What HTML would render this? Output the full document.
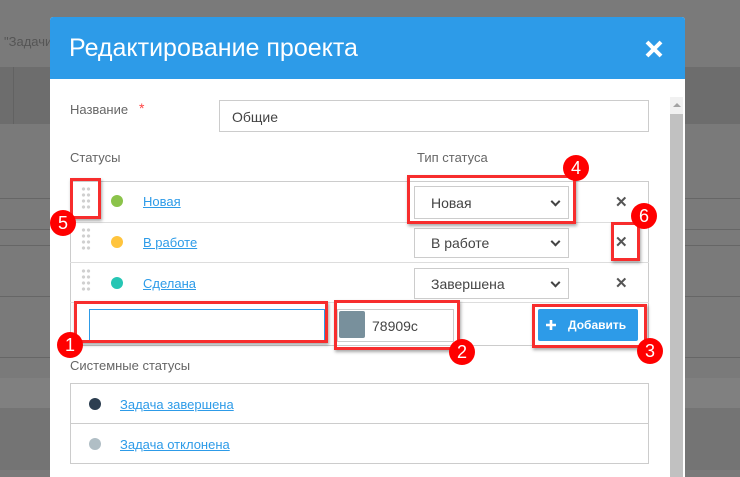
<!DOCTYPE html>
<html><head><meta charset="utf-8"><style>
*{box-sizing:border-box;margin:0;padding:0}
body{width:740px;height:470px;overflow:hidden;background:#7a7a7a;font-family:"Liberation Sans",sans-serif;position:relative}
.a{position:absolute}
.ln{position:absolute;left:0;width:740px;height:1px;background:#666}
.t{color:#666;font-size:13px}
.lk{color:#2d9be8;text-decoration:underline;font-size:13px}
.sel{position:absolute;border:1px solid #ccc;background:#fff;font-size:14px;color:#444;padding-left:16px;display:flex;align-items:center}
.sel:after{content:"";position:absolute;right:9px;top:50%;width:5px;height:5px;border-right:2px solid #444;border-bottom:2px solid #444;transform:translateY(-70%) rotate(45deg)}
.dots{position:absolute;width:10px;height:24px;background-image:radial-gradient(circle,#d0d0d0 1.4px,transparent 1.9px);background-size:5px 6px}
.dot{position:absolute;width:12px;height:12px;border-radius:50%}
.x{position:absolute;font-size:15px;font-weight:bold;color:#555}
.rb{position:absolute;border:3px solid #f72d2d;box-shadow:1px 2px 3px rgba(0,0,0,.35)}
.rc{position:absolute;width:26px;height:26px;border-radius:50%;background:#f00;color:#fff;font-size:18px;text-align:center;line-height:26px}
</style></head><body>
<div class="a" style="left:0;top:67px;width:740px;height:57px;background:#6d6d6d"></div>
<div class="a" style="left:13px;top:67px;width:1px;height:57px;background:#626262"></div>
<div class="a" style="left:0;top:378px;width:740px;height:30px;background:#808080"></div>
<div class="a" style="left:0;top:408px;width:740px;height:62px;background:#747474"></div>
<div class="ln" style="top:198px"></div><div class="ln" style="top:229px"></div><div class="ln" style="top:245px"></div><div class="ln" style="top:296px"></div><div class="ln" style="top:357px"></div>
<div class="a" style="left:4px;top:34px;font-size:13px;color:#555">"Задачи</div>

<div class="a" style="left:50px;top:17px;width:635px;height:460px;background:#fff;border-radius:3px 3px 0 0;overflow:hidden">
 <div class="a" style="left:0;top:0;width:635px;height:62px;background:#2d9be8"></div>
 <div class="a" style="left:19px;top:17px;font-size:25px;color:#fff">Редактирование проекта</div>
 <svg class="a" style="left:595px;top:23px" width="18" height="18" viewBox="0 0 18 18"><path d="M2 2L16 16M16 2L2 16" stroke="#fff" stroke-width="4"/></svg>
 <div class="a" style="left:620px;top:80px;width:13px;height:380px;background:#f1f1f1"></div>
 <div class="a" style="left:620px;top:97px;width:13px;height:370px;background:#c1c1c1"></div>
 <div class="a" style="left:623px;top:86px;border-left:4px solid transparent;border-right:4px solid transparent;border-bottom:4px solid #a3a3a3"></div>
</div>

<div class="a t" style="left:70px;top:102px">Название</div>
<div class="a" style="left:139px;top:100px;color:#f44;font-size:14px">*</div>
<div class="a" style="left:219px;top:100px;width:430px;height:32px;border:1px solid #ccc;font-size:14px;color:#444;padding:8px 12px">Общие</div>
<div class="a t" style="left:70px;top:150px">Статусы</div>
<div class="a t" style="left:417px;top:150px">Тип статуса</div>

<div class="a" style="left:70px;top:181px;width:579px;height:165px;border:1px solid #ccc"></div>
<div class="a" style="left:70px;top:222px;width:579px;height:1px;background:#ddd"></div>
<div class="a" style="left:70px;top:262px;width:579px;height:1px;background:#ddd"></div>
<div class="a" style="left:70px;top:302px;width:579px;height:1px;background:#ddd"></div>

<div class="dots" style="left:81px;top:186px"></div>
<div class="dots" style="left:81px;top:227px"></div>
<div class="dots" style="left:81px;top:268px"></div>
<div class="dot" style="left:111px;top:195px;background:#8bc34a"></div>
<div class="dot" style="left:111px;top:236px;background:#ffc43d"></div>
<div class="dot" style="left:111px;top:277px;background:#26c6b4"></div>
<div class="a lk" style="left:143px;top:194px">Новая</div>
<div class="a lk" style="left:143px;top:235px">В работе</div>
<div class="a lk" style="left:143px;top:276px">Сделана</div>
<div class="sel" style="left:414px;top:186px;width:155px;height:33px">Новая</div>
<div class="sel" style="left:414px;top:228px;width:155px;height:30px">В работе</div>
<div class="sel" style="left:414px;top:268px;width:155px;height:31px">Завершена</div>
<div class="x" style="left:615px;top:193px">✕</div>
<div class="x" style="left:615px;top:233px">✕</div>
<div class="x" style="left:615px;top:274px">✕</div>

<div class="a" style="left:89px;top:309px;width:236px;height:33px;border:1px solid #2d9be8"></div>
<div class="a" style="left:337px;top:309px;width:117px;height:33px;border:1px solid #ccc;font-size:14px;color:#444;padding:8px 0 0 34px">78909c</div>
<div class="a" style="left:339px;top:311px;width:26px;height:27px;background:#78909c;border-radius:2px"></div>
<div class="a" style="left:538px;top:309px;width:100px;height:32px;background:#2d9be8;border-radius:2px;color:#fff;font-size:12px;font-weight:bold;padding-top:9px;padding-left:30px">Добавить</div>
<svg class="a" style="left:545px;top:319px" width="12" height="12" viewBox="0 0 12 12"><path d="M6 1V11M1 6H11" stroke="#fff" stroke-width="2.6"/></svg>

<div class="a t" style="left:70px;top:358px">Системные статусы</div>
<div class="a" style="left:70px;top:383px;width:579px;height:81px;border:1px solid #ccc"></div>
<div class="a" style="left:70px;top:423px;width:579px;height:1px;background:#ccc"></div>
<div class="dot" style="left:89px;top:398px;background:#2c3e50"></div>
<div class="dot" style="left:89px;top:438px;background:#b0bec5"></div>
<div class="a lk" style="left:120px;top:397px">Задача завершена</div>
<div class="a lk" style="left:120px;top:437px">Задача отклонена</div>

<div class="rb" style="left:70px;top:178px;width:31px;height:41px"></div>
<div class="rb" style="left:407px;top:175px;width:169px;height:49px"></div>
<div class="rb" style="left:611px;top:222px;width:29px;height:39px"></div>
<div class="rb" style="left:74px;top:301px;width:254px;height:42px"></div>
<div class="rb" style="left:334px;top:300px;width:126px;height:50px"></div>
<div class="rb" style="left:532px;top:304px;width:115px;height:44px"></div>
<div class="rc" style="left:50px;top:210px">5</div>
<div class="rc" style="left:563px;top:155px">4</div>
<div class="rc" style="left:631px;top:203px">6</div>
<div class="rc" style="left:57px;top:332px">1</div>
<div class="rc" style="left:449px;top:339px">2</div>
<div class="rc" style="left:637px;top:338px">3</div>
</body></html>
